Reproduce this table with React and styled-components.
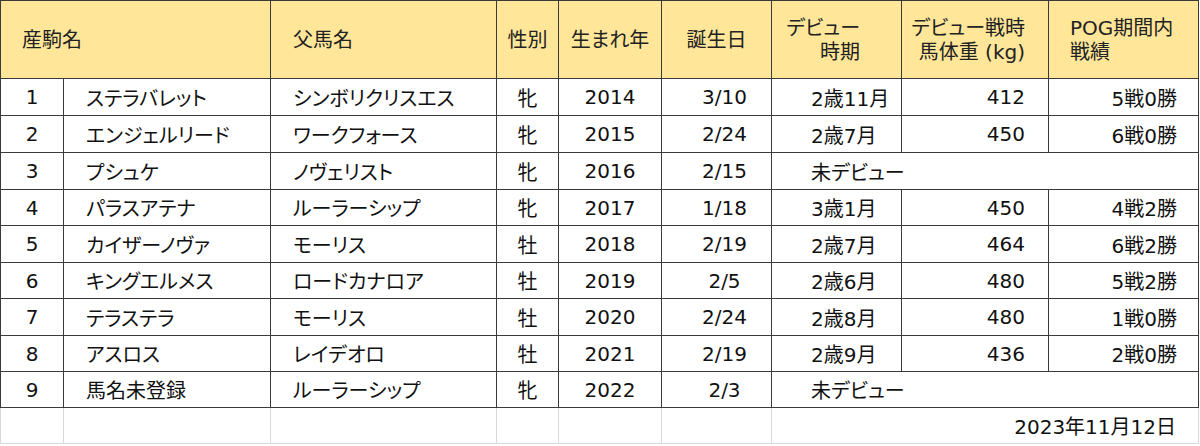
import React from 'react';
import styled, { createGlobalStyle } from 'styled-components';

const COLS = '63px 207px 226px 62px 103px 110px 130px 147px 150px';
const LINE = '#3a3a3a';
const GRID = '#d9d9d9';

const Global = createGlobalStyle`
  html, body { margin: 0; padding: 0; background: #ffffff; }
  body {
    font-family: "DejaVu Sans", "Noto Sans CJK JP", sans-serif;
    font-feature-settings: "palt";
    color: #111111;
  }
`;

const Sheet = styled.div`
  width: 1200px;
  height: 446px;
  overflow: hidden;
  background: #ffffff;
`;

const Table = styled.div`
  width: 1199px;
  box-sizing: border-box;
  border-top: 1px solid ${LINE};
  border-left: 1px solid ${LINE};
`;

const Row = styled.div`
  display: grid;
  grid-template-columns: ${COLS};
  height: ${(p) => p.$h}px;
`;

const justify = { left: 'flex-start', center: 'center', right: 'flex-end' };

const Cell = styled.div`
  box-sizing: border-box;
  grid-column: span ${(p) => p.$span || 1};
  display: flex;
  align-items: center;
  justify-content: ${(p) => justify[p.$align || 'left']};
  text-align: ${(p) => p.$align || 'left'};
  padding-left: ${(p) => p.$pl || 0}px;
  padding-right: ${(p) => p.$pr || 0}px;
  border-right: 1px solid ${LINE};
  border-bottom: 1px solid ${LINE};
  font-size: 20px;
  white-space: nowrap;
  overflow: hidden;
`;

const HeadCell = styled(Cell)`
  background: #ffe699;
  color: #222222;
  line-height: 24px;
`;

const DataCell = styled(Cell)`
  background: #ffffff;
  color: #111111;
`;

const FootRow = styled(Row)`
  width: 1199px;
  box-sizing: border-box;
  border-left: 1px solid ${GRID};
`;

const FootCell = styled(Cell)`
  border-right-color: ${GRID};
  border-bottom-color: ${GRID};
`;

const Lines = styled.span`
  display: block;
`;

const horses = [
  ['1', 'ステラバレット', 'シンボリクリスエス', '牝', '2014', '3/10', '2歳11月', '412', '5戦0勝'],
  ['2', 'エンジェルリード', 'ワークフォース', '牝', '2015', '2/24', '2歳7月', '450', '6戦0勝'],
  ['3', 'プシュケ', 'ノヴェリスト', '牝', '2016', '2/15', '未デビュー'],
  ['4', 'パラスアテナ', 'ルーラーシップ', '牝', '2017', '1/18', '3歳1月', '450', '4戦2勝'],
  ['5', 'カイザーノヴァ', 'モーリス', '牡', '2018', '2/19', '2歳7月', '464', '6戦2勝'],
  ['6', 'キングエルメス', 'ロードカナロア', '牡', '2019', '2/5', '2歳6月', '480', '5戦2勝'],
  ['7', 'テラステラ', 'モーリス', '牡', '2020', '2/24', '2歳8月', '480', '1戦0勝'],
  ['8', 'アスロス', 'レイデオロ', '牡', '2021', '2/19', '2歳9月', '436', '2戦0勝'],
  ['9', '馬名未登録', 'ルーラーシップ', '牝', '2022', '2/3', '未デビュー'],
];

const heights = [37, 37, 37, 36, 37, 36, 37, 36, 36];

export default function App() {
  return (
    <Sheet>
      <Global />
      <Table>
        <Row $h={78}>
          <HeadCell $span={2} $pl={21}>産駒名</HeadCell>
          <HeadCell $pl={22}>父馬名</HeadCell>
          <HeadCell $align="center">性別</HeadCell>
          <HeadCell $align="center">生まれ年</HeadCell>
          <HeadCell $align="center">誕生日</HeadCell>
          <HeadCell $align="right" $pr={41}>
            <Lines>デビュー<br />時期</Lines>
          </HeadCell>
          <HeadCell $align="right" $pr={23}>
            <Lines>デビュー戦時<br />馬体重 (kg)</Lines>
          </HeadCell>
          <HeadCell $pl={21}>
            <Lines>POG期間内<br />戦績</Lines>
          </HeadCell>
        </Row>
        {horses.map((h, i) => (
          <Row key={h[0]} $h={heights[i]}>
            <DataCell $align="center">{h[0]}</DataCell>
            <DataCell $pl={22}>{h[1]}</DataCell>
            <DataCell $pl={22}>{h[2]}</DataCell>
            <DataCell $align="center">{h[3]}</DataCell>
            <DataCell $align="center">{h[4]}</DataCell>
            <DataCell $align="center" $pl={16}>{h[5]}</DataCell>
            {h.length === 7 ? (
              <DataCell $span={3} $pl={39}>{h[6]}</DataCell>
            ) : (
              <>
                <DataCell $pl={39}>{h[6]}</DataCell>
                <DataCell $align="right" $pr={23}>{h[7]}</DataCell>
                <DataCell $align="right" $pr={21}>{h[8]}</DataCell>
              </>
            )}
          </Row>
        ))}
      </Table>
      <FootRow $h={36}>
        <FootCell />
        <FootCell />
        <FootCell />
        <FootCell />
        <FootCell />
        <FootCell />
        <FootCell $span={3} $align="right" $pr={22}>2023年11月12日</FootCell>
      </FootRow>
    </Sheet>
  );
}
